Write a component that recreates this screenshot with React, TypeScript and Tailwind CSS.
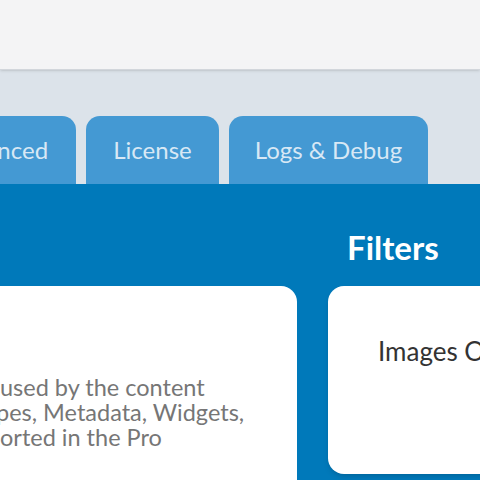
const tabs = [
  { label: "Advanced", width: "w-[160px] -ml-[84px]" },
  { label: "License", width: "w-[133px]" },
  { label: "Logs & Debug", width: "w-[199px]" },
];

// each line of the description: the start sits in a right-aligned box past the left edge
const lines = [
  { lead: "Images ", rest: "used by the content", w: "w-[103px]" },
  { lead: "of Post ty", rest: "pes, Metadata, Widgets,", w: "w-[99px]" },
  { lead: "are supp", rest: "orted in the Pro", w: "w-[103px]" },
];

export default function App() {
  return (
    <div className="h-[480px] w-[480px] overflow-hidden bg-[#dce3ea] font-['Lato',sans-serif]">
      {/* top admin bar */}
      <div className="h-[70px] border-b border-[#d2d6db] bg-[#f4f4f5] shadow-sm"></div>

      {/* settings tabs */}
      <div className="flex gap-[10px] pt-[46px]">
        {tabs.map((tab) => (
          <div
            key={tab.label}
            className={`${tab.width} flex h-[68px] shrink-0 items-center justify-center rounded-t-[14px] bg-[#4499d3] text-[24px] text-[#d8e8f5] whitespace-nowrap`}
          >
            {tab.label}
          </div>
        ))}
      </div>

      {/* tab panel */}
      <div className="flex h-[300px] gap-[31px] bg-[#0079ba] pt-[44px]">
        <div className="-ml-[103px] w-[400px] shrink-0">
          <div className="mb-[20px] h-[38px]"></div>
          <div className="h-[260px] rounded-[16px] bg-white pt-[89px] text-[23.5px] leading-[25px] text-[#767676]">
            {lines.map((line) => (
              <div key={line.rest} className="flex whitespace-nowrap">
                <span className={`${line.w} flex shrink-0 justify-end overflow-hidden`}>
                  <span className="shrink-0">{line.lead}</span>
                </span>
                <span>{line.rest}</span>
              </div>
            ))}
          </div>
        </div>

        <div className="w-[300px] shrink-0">
          <h2 className="mb-[20px] pl-[19px] text-[33px] font-bold leading-[38px] text-white">Filters</h2>
          <div className="h-[188px] rounded-[16px] bg-white pl-[50px] pt-[50px] text-[26px] leading-[30px] text-[#333] shadow-md whitespace-nowrap">
            Images Optimization
          </div>
        </div>
      </div>
    </div>
  );
}
